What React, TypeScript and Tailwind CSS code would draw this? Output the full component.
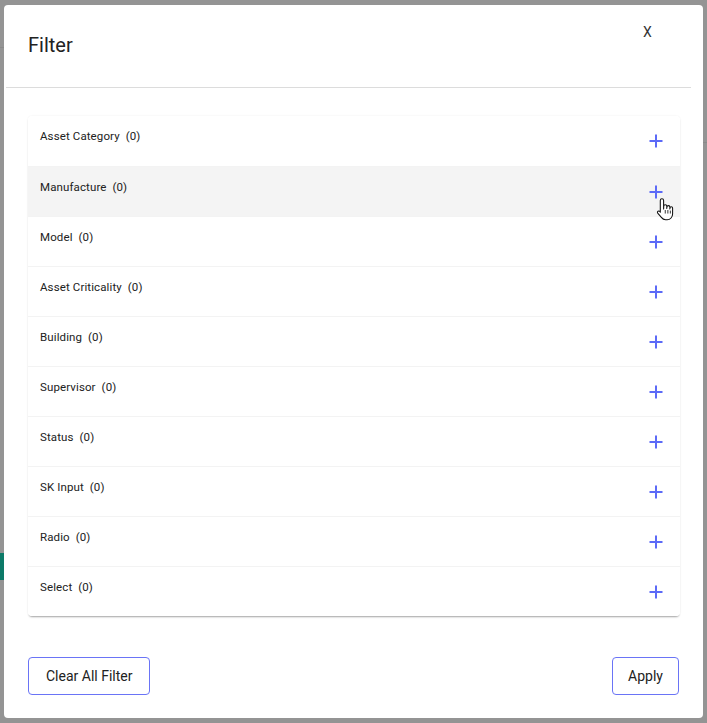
import React from 'react';

const filters = [
  'Asset Category',
  'Manufacture',
  'Model',
  'Asset Criticality',
  'Building',
  'Supervisor',
  'Status',
  'SK Input',
  'Radio',
  'Select',
];

const PlusIcon = () => (
  <svg width="16" height="16" viewBox="0 0 16 16" fill="none">
    <path d="M8 1.5v13M1.5 8h13" stroke="#5c6af7" strokeWidth="2" />
  </svg>
);

const HandCursor = () => (
  <svg width="19" height="26" viewBox="0 0 16 22" className="absolute left-[656px] top-[197px]">
    <path
      d="M5 1.5c.8 0 1.4.6 1.4 1.4v7.2l.1-2.3c0-.8.6-1.3 1.3-1.3s1.3.6 1.3 1.3v2l.1-1.3c0-.7.6-1.2 1.3-1.2s1.2.6 1.2 1.3v1.6l.1-.8c0-.6.5-1.1 1.1-1.1s1.1.5 1.1 1.1v5c0 2.6-1.9 4.8-4.6 4.8H8.1c-1.6 0-2.7-.8-3.6-2L1.4 13.6c-.4-.6-.2-1.3.3-1.6.5-.3 1.1-.2 1.5.3l.4.6V2.9c0-.8.6-1.4 1.4-1.4z"
      fill="#fff"
      stroke="#111"
      strokeWidth="0.9"
      strokeLinejoin="round"
    />
    <path d="M7.8 11v3M10 11v3M12.1 11.5v2.5" stroke="#111" strokeWidth="0.7" />
  </svg>
);

export default function App() {
  return (
    <div
      className="relative w-[707px] h-[723px] bg-[#949494] overflow-hidden"
      style={{ fontFamily: 'Roboto, "Liberation Sans", sans-serif' }}
    >
      {/* page underneath the overlay */}
      <div className="absolute left-0 top-[553px] w-[4px] h-[27px] bg-[#0d7a68]" />
      <div className="absolute left-0 top-[47px] w-[4px] h-px bg-[#8a8a8a]" />
      <div className="absolute right-0 top-[142px] w-[4px] h-px bg-[#8a8a8a]" />

      <div className="absolute left-[4px] top-[5px] w-[699px] h-[713px] bg-white rounded-[4px] flex flex-col">
        <div className="relative h-[82px] flex items-start">
          <h2 className="pl-6 pt-[28px] text-[20px] leading-[24px] text-[#222]">Filter</h2>
          <button className="absolute left-[639px] top-[19px] text-[14px] leading-[16px] text-[#333]">X</button>
        </div>
        <div className="ml-[2px] mr-[12px] h-px bg-[#dcdcdc]" />

        <div className="mt-[28px] mx-6 w-[652px] rounded-[4px] shadow-[0_2px_2px_-1px_rgba(0,0,0,0.35),0_0_2px_rgba(0,0,0,0.08)] overflow-hidden">
          {filters.map((name, i) => (
            <div
              key={name}
              className={`relative h-[50px] flex justify-between pl-3 pr-4 ${i === 1 ? 'bg-[#f4f4f4]' : 'bg-white'} ${i > 0 ? 'border-t border-[#f3f3f3]' : ''}`}
            >
              <span className="pt-[13px] text-[11.5px] leading-[14px] tracking-[0.01em] text-[#222]">
                {name}&nbsp;&nbsp;(0)
              </span>
              <span className="self-center">
                <PlusIcon />
              </span>
            </div>
          ))}
        </div>

        <div className="mt-[41px] mx-6 flex justify-between">
          <button className="h-[38px] px-[17px] rounded-[4px] border border-[#6a74f6] text-[14px] text-[#222]">
            Clear All Filter
          </button>
          <button className="h-[38px] px-[15px] rounded-[4px] border border-[#6a74f6] text-[14px] text-[#222]">
            Apply
          </button>
        </div>
      </div>
      <HandCursor />
    </div>
  );
}
